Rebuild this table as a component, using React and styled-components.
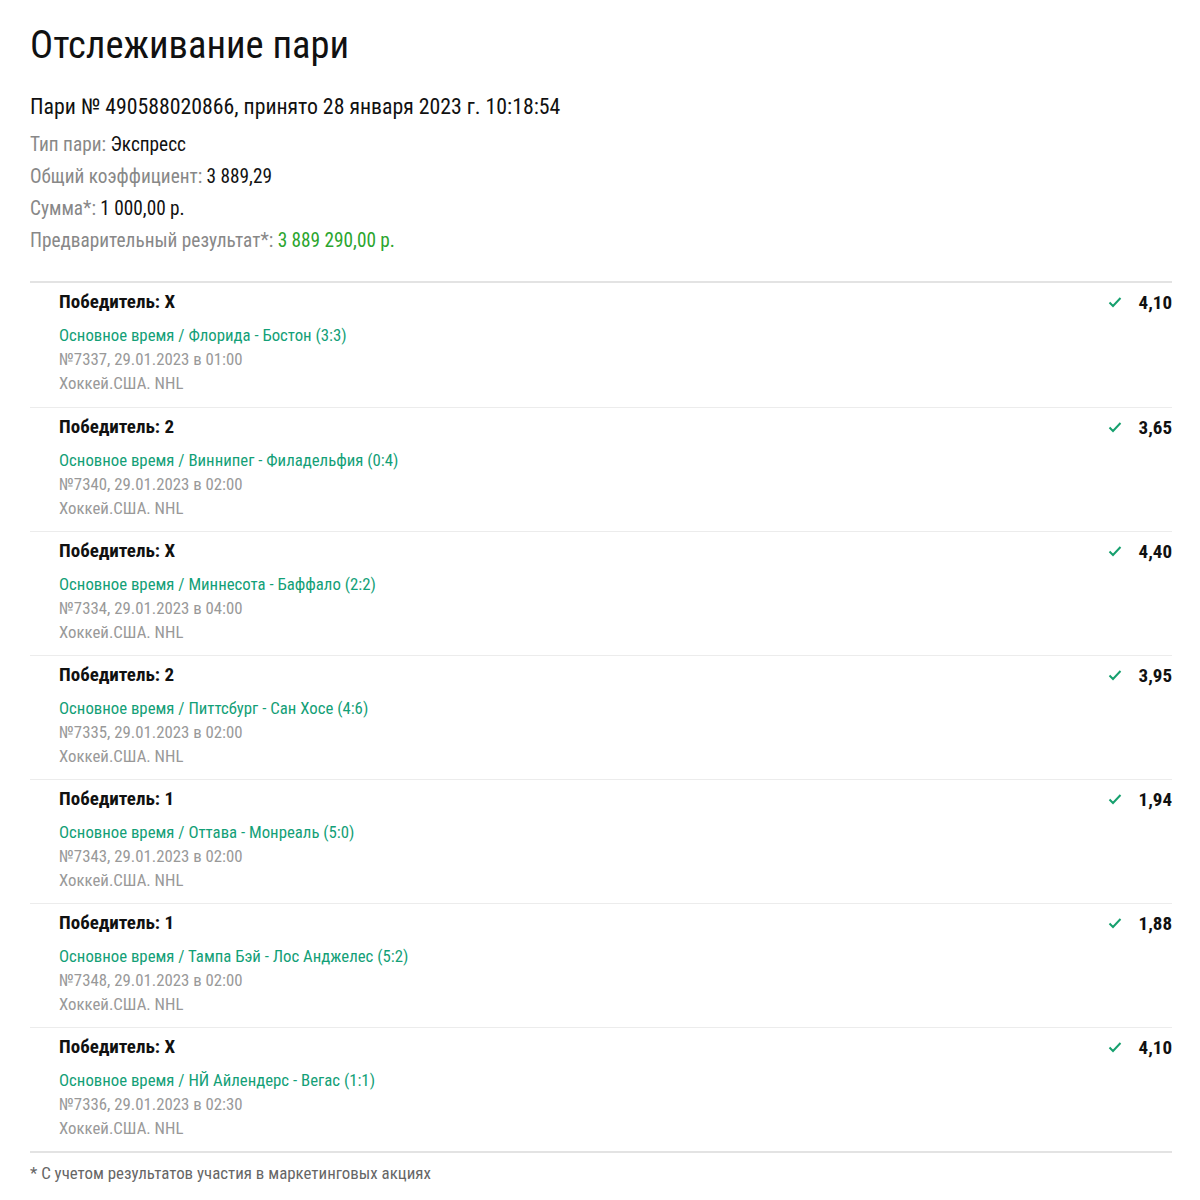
import React from "react";
import styled, { createGlobalStyle } from "styled-components";

const Global = createGlobalStyle`
  html, body { margin: 0; padding: 0; background: #fff; }
  body { font-family: "Roboto Condensed", "Liberation Sans Narrow", "DejaVu Sans Condensed", Roboto, sans-serif; color: #111; }
`;

const Page = styled.div`
  width: 1200px;
  box-sizing: border-box;
  padding: 22px 28px 0 30px;
`;

const Title = styled.h1`
  margin: 0;
  font-size: 38.5px;
  font-weight: 400;
  line-height: 46px;
  color: #111;
`;

const BetHead = styled.div`
  margin-top: 26px;
  font-size: 21.8px;
  line-height: 26px;
  color: #111;
`;

const Info = styled.div`
  display: flex;
  flex-direction: column;
  margin-top: 9px;
`;

const InfoRow = styled.div`
  font-size: 19.3px;
  line-height: 32px;
  color: #888;
`;

const Val = styled.span`
  color: ${(p) => (p.$green ? "#2ba52e" : "#111")};
`;

const List = styled.div`
  margin-top: 24px;
  border-top: 2px solid #e3e3e3;
  border-bottom: 2px solid #e3e3e3;
`;

const Item = styled.div`
  display: flex;
  justify-content: space-between;
  padding: 6px 0 0 29px;
  height: 124px;
  box-sizing: border-box;
  & + & { border-top: 1px solid #ececec; }
`;

const Left = styled.div`
  display: flex;
  flex-direction: column;
`;

const Outcome = styled.div`
  font-size: 19px;
  font-weight: 700;
  line-height: 26px;
  color: #111;
  margin-bottom: 8px;
`;

const Event = styled.div`
  font-size: 16.8px;
  line-height: 24px;
  color: ${(p) => (p.$tone === "green" ? "#13a077" : "#999")};
`;

const Right = styled.div`
  display: flex;
  align-items: center;
  height: 26px;
  gap: 17px;
`;

const Odd = styled.span`
  font-size: 19px;
  font-weight: 700;
  color: #111;
`;

const Note = styled.div`
  margin-top: 10px;
  font-size: 16.9px;
  line-height: 20px;
  color: #666;
`;

const Check = () => (
  <svg width="14" height="12" viewBox="0 0 14 12">
    <path d="M1.5 6.5 L5 10 L12.5 2" fill="none" stroke="#16a06e" strokeWidth="2" />
  </svg>
);

const bets = [
  ["Победитель: X", "Основное время / Флорида - Бостон (3:3)", "№7337, 29.01.2023 в 01:00", "4,10"],
  ["Победитель: 2", "Основное время / Виннипег - Филадельфия (0:4)", "№7340, 29.01.2023 в 02:00", "3,65"],
  ["Победитель: X", "Основное время / Миннесота - Баффало (2:2)", "№7334, 29.01.2023 в 04:00", "4,40"],
  ["Победитель: 2", "Основное время / Питтсбург - Сан Хосе (4:6)", "№7335, 29.01.2023 в 02:00", "3,95"],
  ["Победитель: 1", "Основное время / Оттава - Монреаль (5:0)", "№7343, 29.01.2023 в 02:00", "1,94"],
  ["Победитель: 1", "Основное время / Тампа Бэй - Лос Анджелес (5:2)", "№7348, 29.01.2023 в 02:00", "1,88"],
  ["Победитель: X", "Основное время / НЙ Айлендерс - Вегас (1:1)", "№7336, 29.01.2023 в 02:30", "4,10"],
];

export default function App() {
  return (
    <Page>
      <Global />
      <Title>Отслеживание пари</Title>
      <BetHead>Пари № 490588020866, принято 28 января 2023 г. 10:18:54</BetHead>
      <Info>
        <InfoRow>Тип пари: <Val>Экспресс</Val></InfoRow>
        <InfoRow>Общий коэффициент: <Val>3 889,29</Val></InfoRow>
        <InfoRow>Сумма*: <Val>1 000,00 р.</Val></InfoRow>
        <InfoRow>Предварительный результат*: <Val $green>3 889 290,00 р.</Val></InfoRow>
      </Info>
      <List>
        {bets.map((b, i) => (
          <Item key={i}>
            <Left>
              <Outcome>{b[0]}</Outcome>
              <Event $tone="green">{b[1]}</Event>
              <Event>{b[2]}</Event>
              <Event>Хоккей.США. NHL</Event>
            </Left>
            <Right>
              <Check />
              <Odd>{b[3]}</Odd>
            </Right>
          </Item>
        ))}
      </List>
      <Note>* С учетом результатов участия в маркетинговых акциях</Note>
    </Page>
  );
}
